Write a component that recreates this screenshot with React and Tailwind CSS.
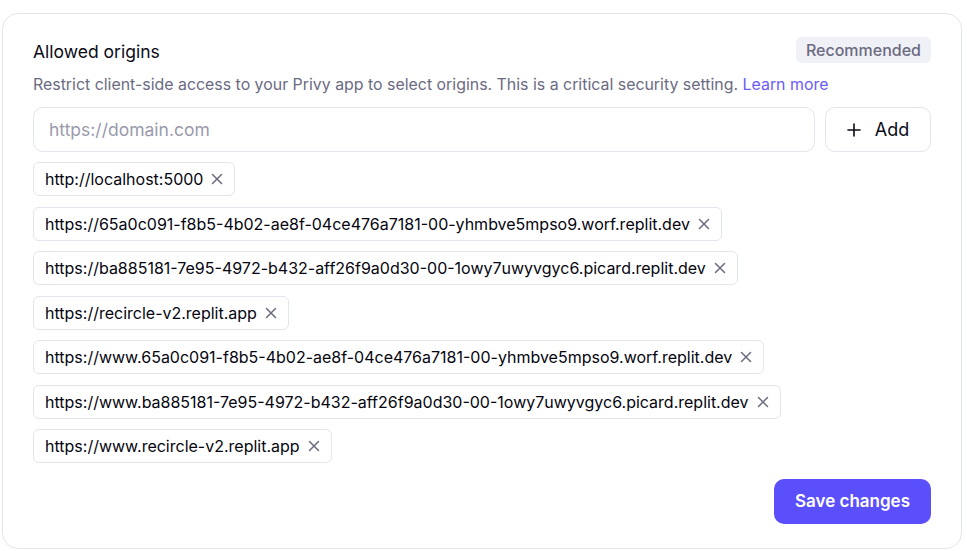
import React, { useState } from 'react';

const origins = [
  'http://localhost:5000',
  'https://65a0c091-f8b5-4b02-ae8f-04ce476a7181-00-yhmbve5mpso9.worf.replit.dev',
  'https://ba885181-7e95-4972-b432-aff26f9a0d30-00-1owy7uwyvgyc6.picard.replit.dev',
  'https://recircle-v2.replit.app',
  'https://www.65a0c091-f8b5-4b02-ae8f-04ce476a7181-00-yhmbve5mpso9.worf.replit.dev',
  'https://www.ba885181-7e95-4972-b432-aff26f9a0d30-00-1owy7uwyvgyc6.picard.replit.dev',
  'https://www.recircle-v2.replit.app',
];

const XIcon = () => (
  <svg width="12" height="12" viewBox="0 0 12 12" fill="none" stroke="currentColor" strokeWidth="1.5" strokeLinecap="round">
    <path d="M1.5 1.5l9 9M10.5 1.5l-9 9" />
  </svg>
);

const PlusIcon = () => (
  <svg width="14" height="14" viewBox="0 0 14 14" fill="none" stroke="currentColor" strokeWidth="1.6" strokeLinecap="round">
    <path d="M7 1v12M1 7h12" />
  </svg>
);

export default function App() {
  const [items, setItems] = useState(origins);
  const [value, setValue] = useState('');

  return (
    <div className="w-[967px] h-[551px] bg-white pt-[13px] pl-[2px] pr-[5px] font-['Inter','Liberation_Sans',sans-serif]">
      <div className="h-[536px] rounded-2xl border border-[#e4e4ef] px-[30px] pt-[23px] flex flex-col">
        {/* header */}
        <div className="flex items-start justify-between h-[26px]">
          <h2 className="mt-[4px] text-[17.5px] leading-[22px] font-normal text-[#0b0b16]">Allowed origins</h2>
          <span className="px-[10px] h-[26px] flex items-center rounded-md bg-[#f0f0f7] text-[16px] font-medium text-[#6b6b80]">
            Recommended
          </span>
        </div>
        <p className="mt-[12px] text-[15.9px] text-[#6b6b82] leading-[20px]">
          Restrict client-side access to your Privy app to select origins. This is a critical security setting.{' '}
          <a href="#" className="text-[#6a5cf6]">Learn more</a>
        </p>

        {/* input row */}
        <div className="mt-[12px] flex gap-[10px]">
          <input
            value={value}
            onChange={(e) => setValue(e.target.value)}
            placeholder="https://domain.com"
            className="flex-1 h-[45px] rounded-[10px] border border-[#e4e4ef] px-[15px] text-[17.5px] text-[#0b0b16] placeholder:text-[#9a9aab] outline-none"
          />
          <button
            onClick={() => {
              if (value) {
                setItems([...items, value]);
                setValue('');
              }
            }}
            className="w-[106px] h-[45px] rounded-[10px] border border-[#e4e4ef] flex items-center justify-center gap-[14px] text-[18px] font-normal text-[#0b0b16]"
          >
            <PlusIcon />
            Add
          </button>
        </div>

        {/* chips */}
        <div className="mt-[10px] flex flex-col items-start gap-[10.5px]">
          {items.map((o) => (
            <div
              key={o}
              className="h-[34px] flex items-center gap-[8px] pl-[11px] pr-[11px] rounded-md border border-[#e4e4ef] text-[16px] text-[#05050f]"
            >
              <span>{o}</span>
              <button onClick={() => setItems(items.filter((i) => i !== o))} className="text-[#6b6b80]">
                <XIcon />
              </button>
            </div>
          ))}
        </div>

        <div className="mt-auto mb-[24px] flex justify-end">
          <button className="h-[45px] px-[21px] rounded-[10px] bg-[#5b4ffc] text-white text-[17px] font-semibold">
            Save changes
          </button>
        </div>
      </div>
    </div>
  );
}
